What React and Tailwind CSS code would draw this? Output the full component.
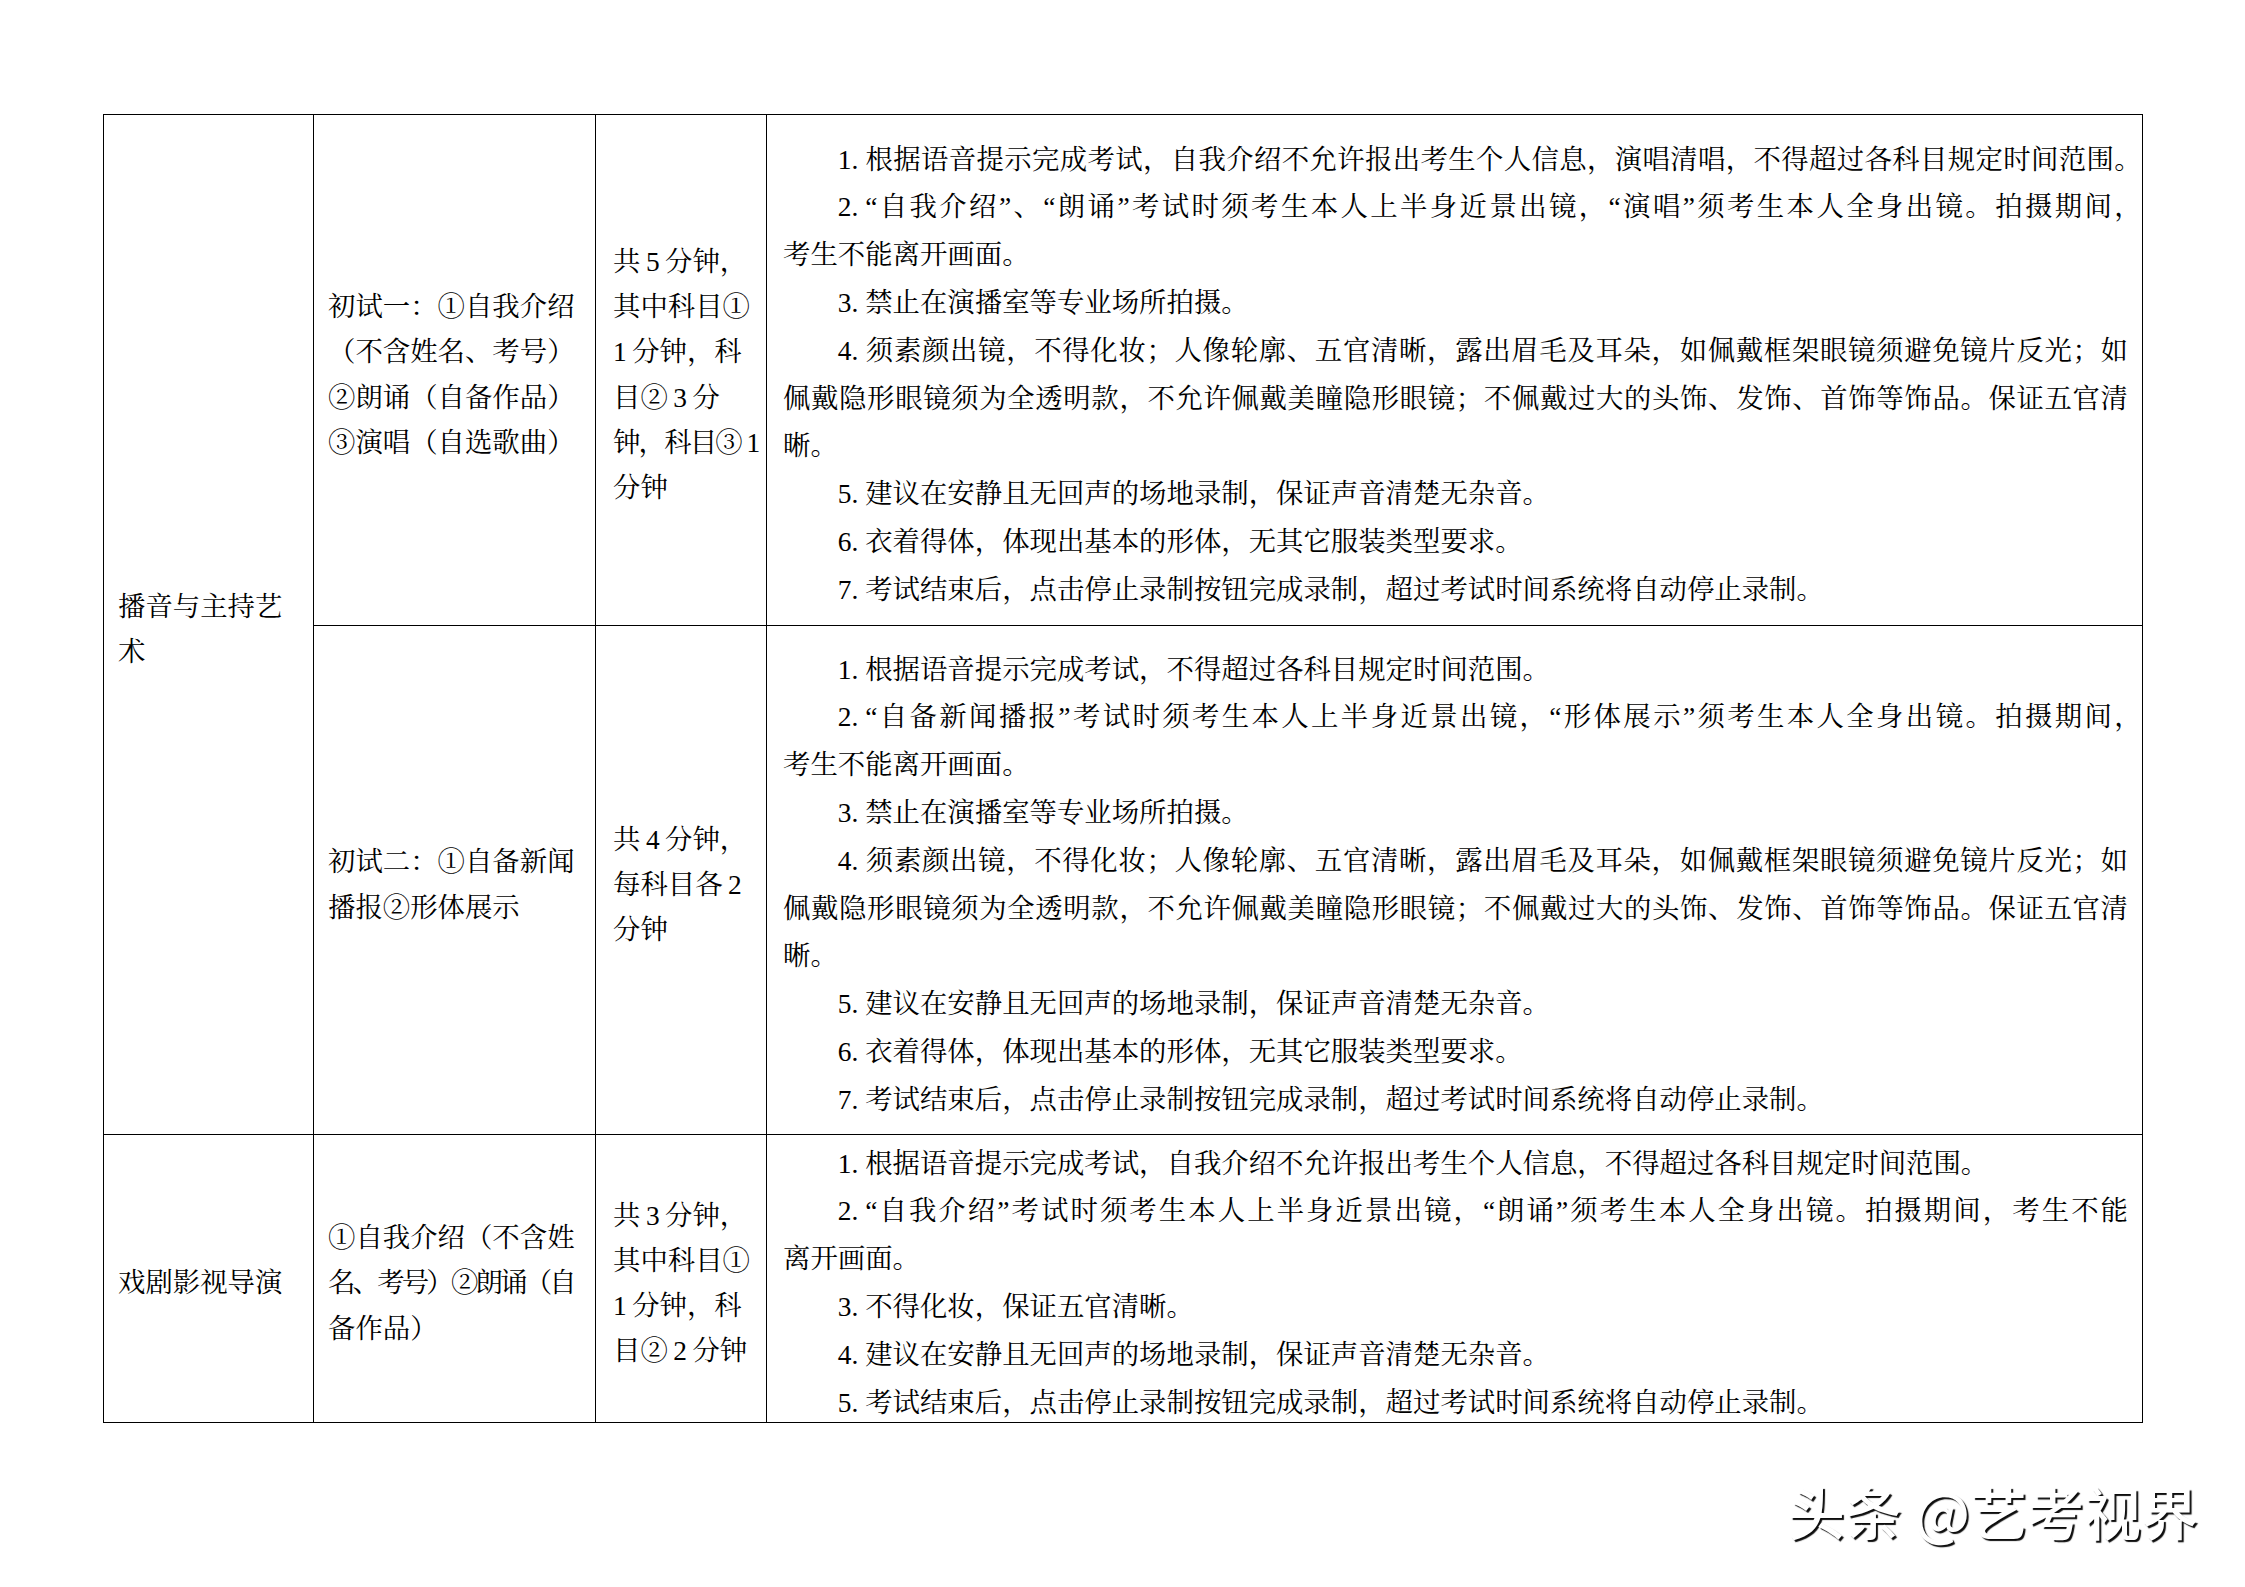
import React from 'react';

const serif = "font-['Liberation_Serif','Noto_Serif_CJK_SC','Noto_Sans_CJK_SC',serif]";

const item4 = [
    '须素颜出镜，不得化妆；人像轮廓、五官清晰，露出眉毛及耳朵，如佩戴框架眼镜须避免镜片反光；如',
    '佩戴隐形眼镜须为全透明款，不允许佩戴美瞳隐形眼镜；不佩戴过大的头饰、发饰、首饰等饰品。保证五官清',
    '晰。',
];
const quiet = ['建议在安静且无回声的场地录制，保证声音清楚无杂音。'];
const dress = ['衣着得体，体现出基本的形体，无其它服装类型要求。'];
const stop = ['考试结束后，点击停止录制按钮完成录制，超过考试时间系统将自动停止录制。'];

// a line is either a string or [string, extra classes] where the original squeezes punctuation
const rows = [
    {
        exam: ['初试一：①自我介绍', '（不含姓名、考号）', '②朗诵（自备作品）', '③演唱（自选歌曲）'],
        time: ['共5分钟，', '其中科目①', '1分钟，科', '目②3分', ['钟，科目③1', 'tracking-[-1.8px]'], '分钟'],
        rules: [
            { lines: ['根据语音提示完成考试，自我介绍不允许报出考生个人信息，演唱清唱，不得超过各科目规定时间范围。'], full: true },
            { lines: ['“自我介绍”、“朗诵”考试时须考生本人上半身近景出镜，“演唱”须考生本人全身出镜。拍摄期间，', '考生不能离开画面。'] },
            { lines: ['禁止在演播室等专业场所拍摄。'] },
            { lines: item4 },
            { lines: quiet },
            { lines: dress },
            { lines: stop },
        ],
    },
    {
        exam: ['初试二：①自备新闻', '播报②形体展示'],
        time: ['共4分钟，', '每科目各2', '分钟'],
        rules: [
            { lines: ['根据语音提示完成考试，不得超过各科目规定时间范围。'] },
            { lines: ['“自备新闻播报”考试时须考生本人上半身近景出镜，“形体展示”须考生本人全身出镜。拍摄期间，', '考生不能离开画面。'] },
            { lines: ['禁止在演播室等专业场所拍摄。'] },
            { lines: item4 },
            { lines: quiet },
            { lines: dress },
            { lines: stop },
        ],
    },
    {
        exam: ['①自我介绍（不含姓', ['名、考号）②朗诵（自', 'tracking-[-2.8px]'], '备作品）'],
        time: ['共3分钟，', '其中科目①', '1分钟，科', '目②2分钟'],
        rules: [
            { lines: ['根据语音提示完成考试，自我介绍不允许报出考生个人信息，不得超过各科目规定时间范围。'] },
            { lines: ['“自我介绍”考试时须考生本人上半身近景出镜，“朗诵”须考生本人全身出镜。拍摄期间，考生不能', '离开画面。'] },
            { lines: ['不得化妆，保证五官清晰。'] },
            { lines: quiet },
            { lines: stop },
        ],
    },
];

const split = (line) => (Array.isArray(line) ? line : [line, '']);

// digits get a little air next to the ideographs, like Word does
const Spaced = ({ text }) => {
    const parts = text.split(/(\d+)/);
    return parts.map((s, i) =>
        /\d/.test(s) ? (
            <span key={i} className={i === 1 && parts[0] === '' ? 'mr-[0.2em]' : 'mx-[0.2em]'}>{s}</span>
        ) : (
            <React.Fragment key={i}>{s}</React.Fragment>
        )
    );
};

const Rule = ({ n, lines, full }) => (
    <div>
        {lines.map((line, i) => {
            const justify = i < lines.length - 1 || full;
            // closing punctuation hangs into the margin, as in the printed page
            const hang = justify && /[，。；、]$/.test(line);
            return (
                <div
                    key={i}
                    className={`${justify ? 'whitespace-nowrap text-justify [text-align-last:justify]' : ''} ${hang ? '-mr-[0.5em]' : ''} ${i === 0 ? 'pl-[2em]' : ''}`}
                >
                    {i === 0 && <span className="inline-block w-[1em]">{n}.</span>}
                    {line}
                </div>
            );
        })}
    </div>
);

const App = () => {
    return (
        <div className={`min-h-[1587px] w-full bg-white text-black text-[27.4px] ${serif}`}>
            <div className="ml-[103px] pt-[114px]">
                <div className="grid w-[2040px] grid-cols-[209px_281px_170px_1375px] grid-rows-[510px_508px_287px] gap-px bg-black p-px">
                    {/* major: spans the two preliminary rows */}
                    <div className="row-span-2 flex flex-col justify-center bg-white pt-[11px] pl-[14px] pr-[20px] leading-[45.2px]">
                        播音与主持艺术
                    </div>

                    {rows.map((row, r) => (
                        <React.Fragment key={r}>
                            {r === 2 && (
                                <div className="flex flex-col justify-center bg-white pt-[11px] pl-[14px] pr-[20px] leading-[45.2px]">
                                    戏剧影视导演
                                </div>
                            )}
                            <div className="flex flex-col justify-center bg-white pt-[11px] pl-[14px] pr-[10px] leading-[45.2px] whitespace-nowrap">
                                {row.exam.map((line) => {
                                    const [text, cls] = split(line);
                                    return (
                                        <div key={text} className={cls}>{text}</div>
                                    );
                                })}
                            </div>
                            <div className="flex flex-col justify-center bg-white pt-[11px] pl-[17px] pr-[6px] leading-[45.2px] whitespace-nowrap">
                                {row.time.map((line) => {
                                    const [text, cls] = split(line);
                                    return (
                                        <div key={text} className={cls}>
                                            <Spaced text={text} />
                                        </div>
                                    );
                                })}
                            </div>
                            <div className="flex flex-col justify-center bg-white pt-[11px] pl-[16px] pr-[14px] leading-[47.8px]">
                                {row.rules.map((rule, i) => (
                                    <Rule key={i} n={i + 1} lines={rule.lines} full={rule.full} />
                                ))}
                            </div>
                        </React.Fragment>
                    ))}
                </div>
            </div>

            {/* toutiao watermark */}
            <div className="mt-[59px] flex justify-end pr-[47px]">
                <span className="font-['Noto_Sans_CJK_SC',sans-serif] text-[57px] font-medium leading-none text-white [text-shadow:2px_2px_1px_rgba(0,0,0,0.95)]">
                    头条 @艺考视界
                </span>
            </div>
        </div>
    );
};

export default App;
